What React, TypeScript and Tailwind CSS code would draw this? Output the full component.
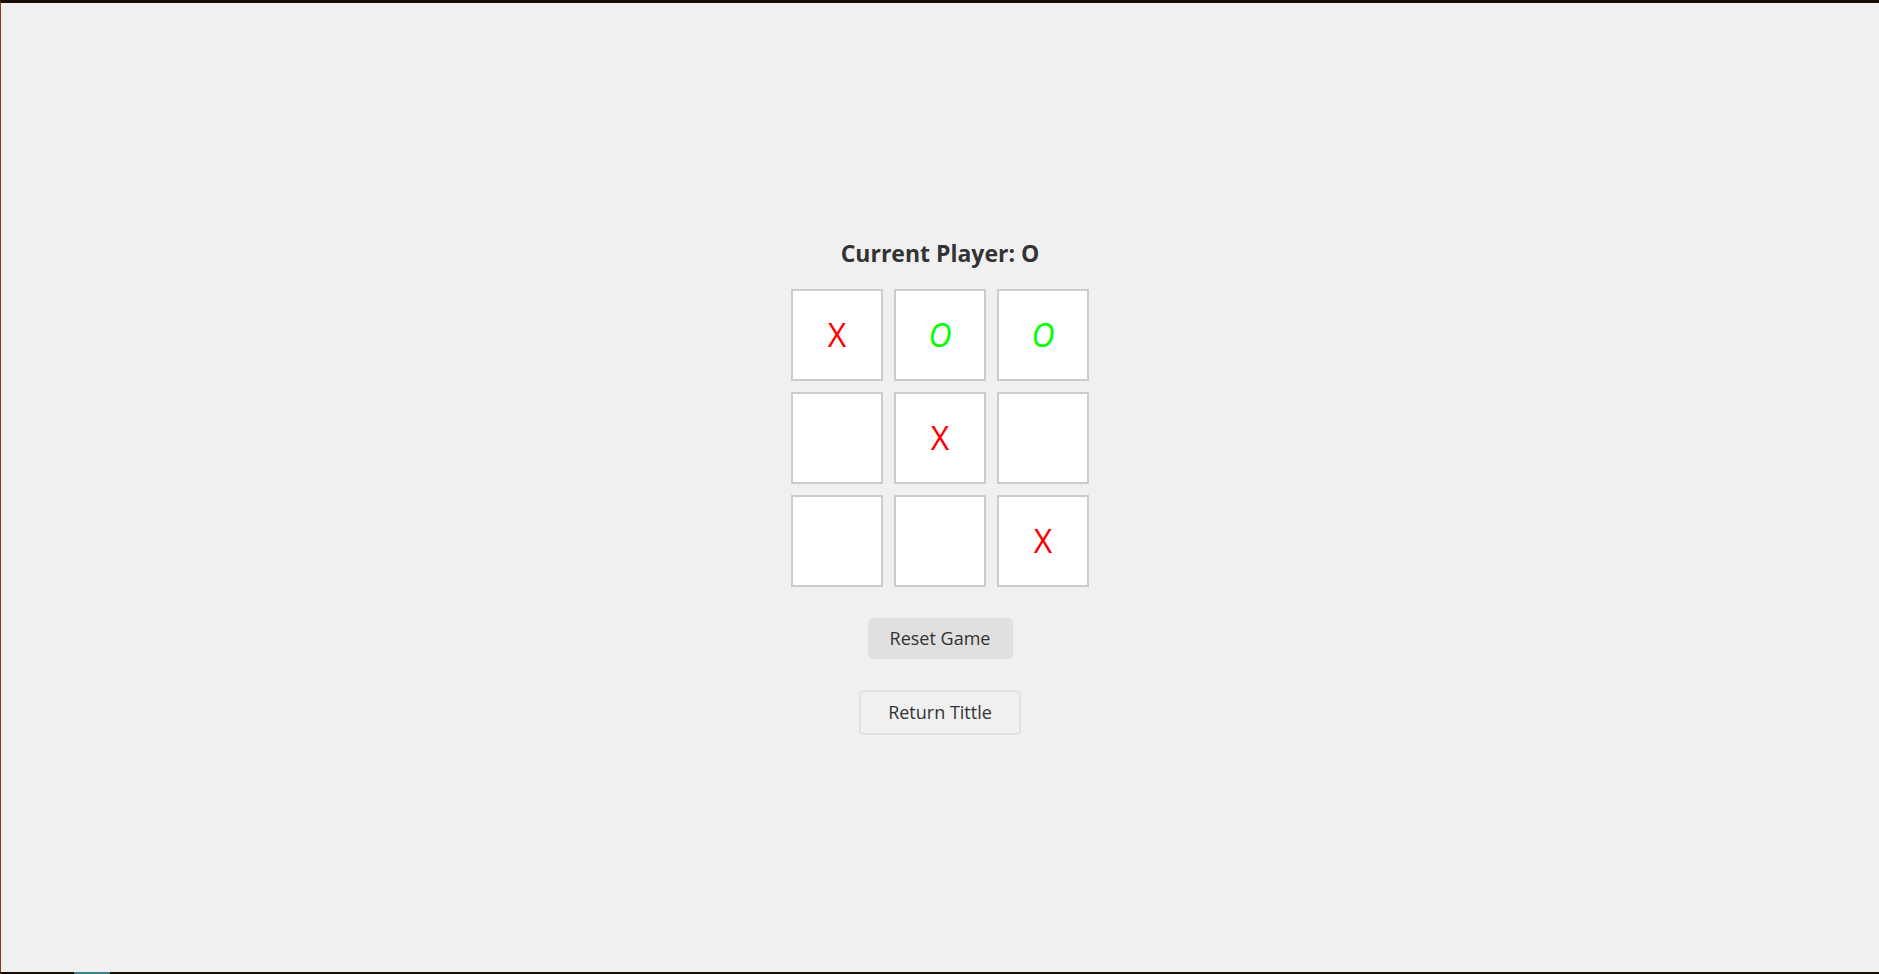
const board = ["X", "O", "O", "", "X", "", "", "", "X"];

function Cell({ value }: { value: string }) {
  return (
    <div className="flex h-[92px] w-[92px] items-center justify-center border-2 border-[#cccccc] bg-white">
      {value === "X" && (
        <span className="text-[32px] leading-none text-[#ff0000]">X</span>
      )}
      {value === "O" && (
        <span className="text-[32px] italic leading-none text-[#00ff00]">O</span>
      )}
    </div>
  );
}

export default function App() {
  return (
    <div
      className="relative flex h-screen flex-col items-center justify-center border-t-[3px] border-b-2 border-l border-t-[#140d00] border-b-[#140d00] border-l-[#8b3c0a] bg-[#f0f0f0] pb-[5px] text-[#333333]"
      style={{ fontFamily: '"Comic Sans MS", "Open Sans", sans-serif' }}
    >
      <h2 className="text-[23px] font-bold leading-[36px]">Current Player: O</h2>
      <div className="mt-[18px] grid grid-cols-3 gap-[11px]">
        {board.map((v, i) => (
          <Cell key={i} value={v} />
        ))}
      </div>
      <button className="mt-[31px] h-[41px] w-[145px] rounded-[5px] bg-[#e0e0e0] text-[18px]">
        Reset Game
      </button>
      <button className="mt-[31px] h-[45px] w-[162px] rounded-[5px] border-2 border-[#e0e0e0] bg-[#f0f0f0] text-[18px]">
        Return Tittle
      </button>
      <div className="absolute bottom-[-2px] left-[73px] h-[2px] w-[36px] bg-[#3d7f86]" />
    </div>
  );
}
